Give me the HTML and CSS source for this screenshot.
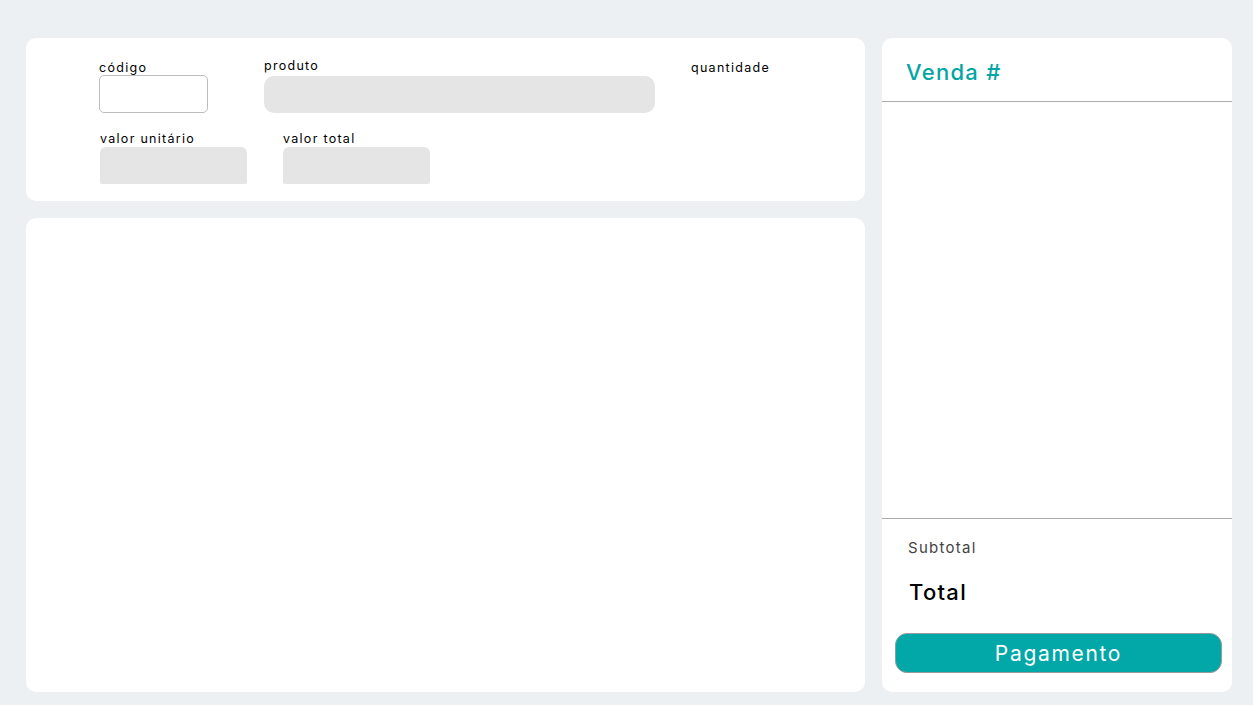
FILE: index.html
```html
<!DOCTYPE html>
<html lang="pt">
<head>
<meta charset="utf-8">
<title>Venda</title>
<link rel="stylesheet" href="styles.css">
</head>
<body>
<div class="page">
  <main class="main">
    <section class="card form-card">
      <div class="row row-1">
        <div class="field f-codigo">
          <label class="lbl">código</label>
          <div class="input input-white"></div>
        </div>
        <div class="field f-produto">
          <label class="lbl">produto</label>
          <div class="input input-gray"></div>
        </div>
        <div class="field f-qtd">
          <label class="lbl">quantidade</label>
        </div>
      </div>
      <div class="row row-2">
        <div class="field f-unit">
          <label class="lbl">valor unitário</label>
          <div class="input input-gray input-sq"></div>
        </div>
        <div class="field f-total">
          <label class="lbl">valor total</label>
          <div class="input input-gray input-sq"></div>
        </div>
      </div>
    </section>
    <section class="card list-card"></section>
  </main>
  <aside class="card side">
    <header class="side-head">
      <h1 class="title">Venda #</h1>
    </header>
    <div class="side-body"></div>
    <footer class="side-foot">
      <div class="subtotal">Subtotal</div>
      <div class="total">Total</div>
      <button class="pay">Pagamento</button>
    </footer>
  </aside>
</div>
</body>
</html>
```
FILE: styles.css
```css
* { box-sizing: border-box; }
html, body { margin: 0; padding: 0; }
body {
  background: #ecf0f3;
  font-family: "Inter", "Noto Sans", sans-serif;
  color: #000;
  width: 1253px;
  height: 705px;
  overflow: hidden;
  letter-spacing: 0.08em;
}
.page {
  display: flex;
  gap: 17px;
  padding: 38px 21px 13px 26px;
  height: 705px;
}
.main {
  width: 839px;
  display: flex;
  flex-direction: column;
  gap: 17px;
}
.card {
  background: #fff;
  border-radius: 10px;
}
.form-card {
  height: 163px;
  padding: 20px 0 0 73px;
}
.list-card { flex: 1; }
.row { display: flex; }
.row-2 { margin-top: 17px; padding-left: 1px; }
.field { display: flex; flex-direction: column; }
.lbl {
  font-size: 12.5px;
  line-height: 16px;
  height: 17px;
}
.f-codigo { width: 109px; }
.f-codigo .lbl { margin-top: 2px; height: 15px; }
.f-produto { width: 391px; margin-left: 56px; }
.f-produto .lbl { height: 18px; }
.f-qtd { margin-left: 36px; }
.f-qtd .lbl { margin-top: 2px; }
.f-unit { width: 147px; }
.f-total { width: 147px; margin-left: 36px; }
.f-unit .lbl, .f-total .lbl { margin-top: 1px; height: 16px; }
.input { height: 38px; }
.input-white {
  border: 1px solid #bdbdbd;
  border-radius: 5px;
  background: #fff;
}
.input-gray {
  background: #e5e5e5;
  border-radius: 10px;
  height: 37px;
}
.input-sq {
  border-radius: 6px 6px 2px 2px;
  height: 37px;
}
.side {
  width: 350px;
  display: flex;
  flex-direction: column;
  overflow: hidden;
}
.side-head {
  height: 64px;
  border-bottom: 1px solid #ababab;
  padding: 19px 0 0 24px;
}
.title {
  margin: 0;
  font-size: 22px;
  line-height: 30px;
  font-weight: 500;
  color: #03a5a5;
}
.side-body { flex: 1; }
.side-foot {
  height: 174px;
  border-top: 1px solid #ababab;
  padding: 19px 10px 19px 13px;
  display: flex;
  flex-direction: column;
}
.subtotal {
  padding-left: 13px;
  font-size: 15px;
  line-height: 20px;
  color: #444;
}
.total {
  padding-left: 14px;
  margin-top: 22px;
  font-size: 22px;
  line-height: 24px;
  font-weight: 500;
}
.pay {
  margin-top: auto;
  height: 40px;
  width: 327px;
  background: #02a7a7;
  border: 1px solid #9a9a9a;
  border-radius: 12px;
  color: #fff;
  font-family: inherit;
  font-size: 21px;
  letter-spacing: 0.08em;
  line-height: 1;
  padding: 0;
}
```
